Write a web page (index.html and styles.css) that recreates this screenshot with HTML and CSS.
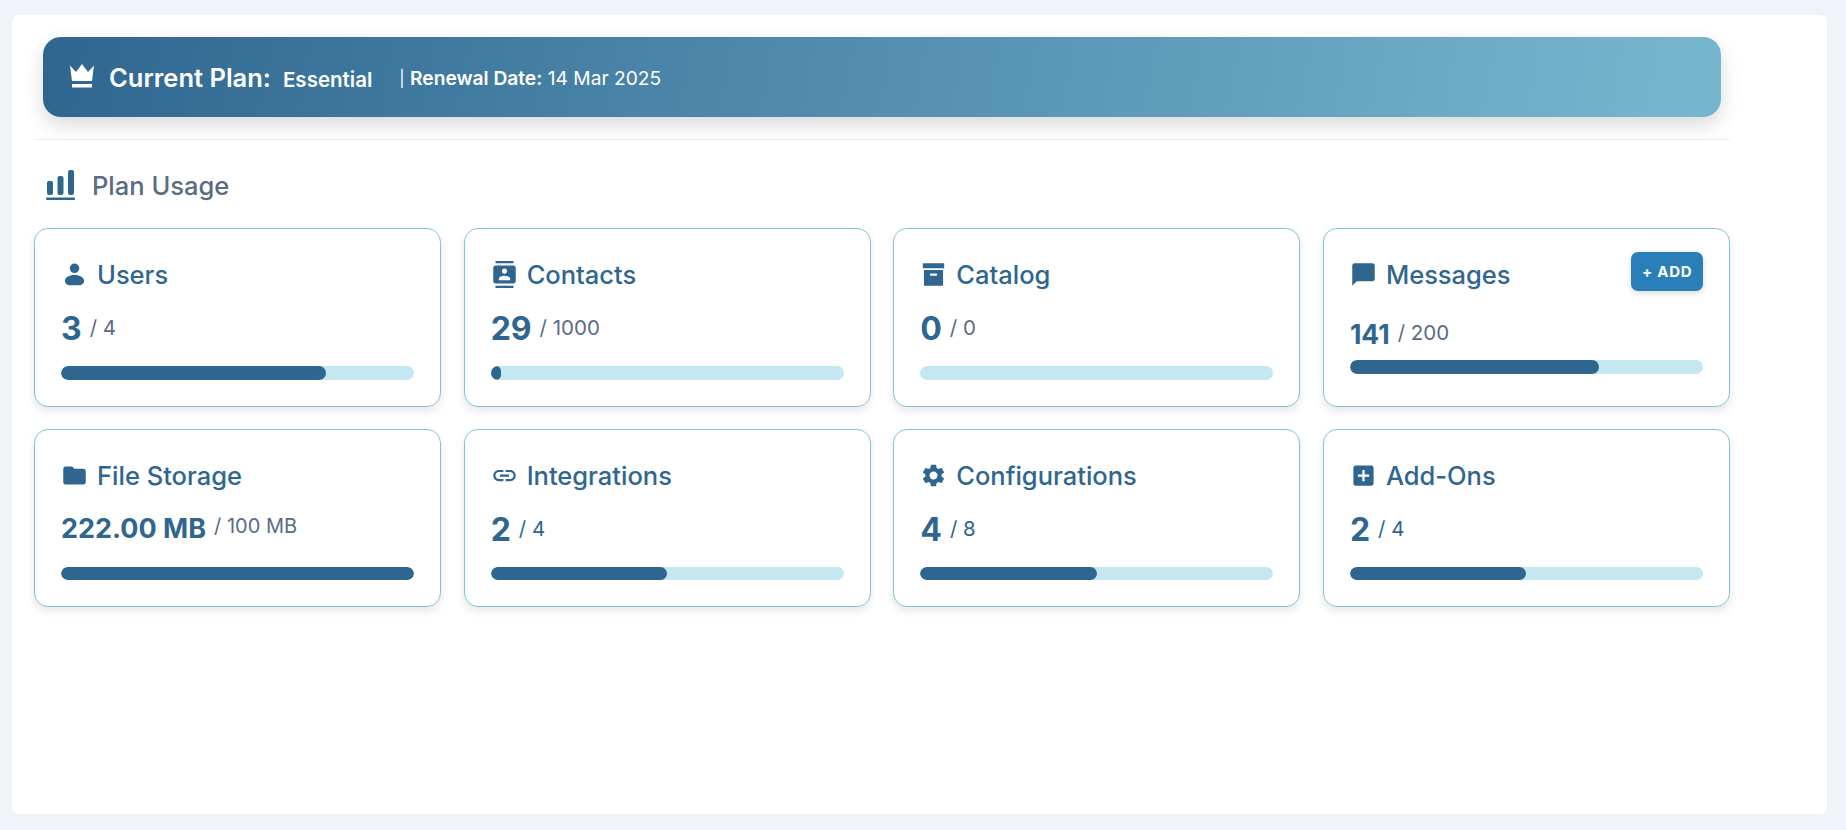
FILE: index.html
```html
<!DOCTYPE html>
<html lang="en">
<head>
    <meta charset="UTF-8">
    <meta name="viewport" content="width=device-width, initial-scale=1.0">
    <title>Plan Usage</title>
    <link rel="stylesheet" href="styles.css">
</head>
<body>

    <div class="panel">
        <div class="plan-banner">
            <svg class="crown" viewBox="0 0 26 24"><path d="M1 1.500 7 8l6-8 6 8 6-6.500-2 15.500H3z"/><path d="M3 20h20v3.500H3z"/></svg>
            <span class="plan-label">Current Plan:</span>
            <span class="plan-name">Essential</span>
            <span class="renewal"><span class="renewal-bar">|</span> <b>Renewal Date:</b> 14 Mar 2025</span>
        </div>

        <div class="divider"></div>

        <h2 class="section-title">
            <svg class="chart" viewBox="0 0 29 30"><rect x="1" y="11" width="6" height="14" rx="2"/><rect x="11.500" y="6" width="6" height="19" rx="2"/><rect x="22" y="0" width="6" height="25" rx="2"/><rect x="0" y="27.500" width="29" height="2.500" rx="1"/></svg>
            Plan Usage
        </h2>

        <div class="usage-grid">
            <div class="card">
                <div class="card-head">
                    <h3 class="card-title">
                        <svg class="icon" viewBox="0 0 24 24"><circle cx="12" cy="6.500" r="4.200"/><path d="M12 12.500c5 0 8.500 2.200 8.500 5.200 0 2.300-2 3.800-4.500 3.800H8c-2.500 0-4.500-1.500-4.500-3.800 0-3 3.500-5.200 8.500-5.200z"/></svg>
                        Users
                    </h3>
                </div>
                <div class="count"><span class="used">3</span><span class="limit">/ 4</span></div>
                <div class="bar"><div class="fill" style="width: 75%"></div></div>
            </div>

            <div class="card">
                <div class="card-head">
                    <h3 class="card-title">
                        <svg class="icon" viewBox="0 0 24 24"><path d="M20 0H4v2h16V0zM4 24h16v-2H4v2zM20 4H4c-1.100 0-2 .9-2 2v12c0 1.100.9 2 2 2h16c1.100 0 2-.9 2-2V6c0-1.100-.9-2-2-2zm-8 2.750c1.240 0 2.250 1.010 2.250 2.250s-1.010 2.250-2.250 2.250S9.750 10.240 9.750 9 10.760 6.750 12 6.750zM17 17H7v-1.500c0-1.670 3.330-2.500 5-2.500s5 .83 5 2.500V17z"/></svg>
                        Contacts
                    </h3>
                </div>
                <div class="count"><span class="used">29</span><span class="limit">/ 1000</span></div>
                <div class="bar"><div class="fill" style="width: 2.9%"></div></div>
            </div>

            <div class="card">
                <div class="card-head">
                    <h3 class="card-title">
                        <svg class="icon" viewBox="0 0 24 24"><path d="M2.500 2h19v4.500h-19zM3.500 8h17v14h-17zM9 11v2.200h6V11z" fill-rule="evenodd"/></svg>
                        Catalog
                    </h3>
                </div>
                <div class="count"><span class="used">0</span><span class="limit">/ 0</span></div>
                <div class="bar"><div class="fill" style="width: 0%"></div></div>
            </div>

            <div class="card">
                <div class="card-head">
                    <h3 class="card-title">
                        <svg class="icon" viewBox="0 0 24 24"><path d="M20 2H4c-1.100 0-2 .9-2 2v18l4-4h14c1.100 0 2-.9 2-2V4c0-1.100-.9-2-2-2z"/></svg>
                        Messages
                    </h3>
                    <button class="add-btn">+ ADD</button>
                </div>
                <div class="count count-small"><span class="used">141</span><span class="limit">/ 200</span></div>
                <div class="bar"><div class="fill" style="width: 70.500%"></div></div>
            </div>

            <div class="card">
                <div class="card-head">
                    <h3 class="card-title">
                        <svg class="icon" viewBox="0 0 24 24"><path d="M10 4H4c-1.100 0-1.990.9-1.990 2L2 18c0 1.100.9 2 2 2h16c1.100 0 2-.9 2-2V8c0-1.100-.9-2-2-2h-8l-2-2z"/></svg>
                        File Storage
                    </h3>
                </div>
                <div class="count count-storage"><span class="used">222.00 MB</span><span class="limit">/ 100 MB</span></div>
                <div class="bar"><div class="fill" style="width: 100%"></div></div>
            </div>

            <div class="card">
                <div class="card-head">
                    <h3 class="card-title">
                        <svg class="icon" viewBox="0 0 24 24"><path d="M3.900 12c0-1.710 1.390-3.100 3.100-3.100h4V7H7c-2.760 0-5 2.240-5 5s2.240 5 5 5h4v-1.900H7c-1.710 0-3.100-1.390-3.100-3.100zM8 13h8v-2H8v2zm9-6h-4v1.900h4c1.710 0 3.100 1.390 3.100 3.100s-1.390 3.100-3.100 3.100h-4V17h4c2.760 0 5-2.240 5-5s-2.240-5-5-5z"/></svg>
                        Integrations
                    </h3>
                </div>
                <div class="count"><span class="used">2</span><span class="limit limit-blue">/ 4</span></div>
                <div class="bar"><div class="fill" style="width: 50%"></div></div>
            </div>

            <div class="card">
                <div class="card-head">
                    <h3 class="card-title">
                        <svg class="icon" viewBox="0 0 24 24"><path d="M19.140 12.940c.04-.3.06-.61.06-.94 0-.32-.02-.64-.07-.94l2.030-1.580c.18-.14.23-.41.12-.61l-1.920-3.320c-.12-.22-.37-.29-.59-.22l-2.390.96c-.5-.38-1.030-.7-1.620-.94l-.36-2.540c-.04-.24-.24-.41-.48-.41h-3.840c-.24 0-.43.17-.47.41l-.36 2.540c-.59.24-1.130.57-1.620.94l-2.390-.96c-.22-.08-.47 0-.59.22L2.740 8.870c-.12.21-.08.47.12.61l2.030 1.580c-.05.3-.09.63-.09.94s.02.64.07.94l-2.030 1.580c-.18.14-.23.41-.12.61l1.920 3.320c.12.22.37.29.59.22l2.390-.96c.5.38 1.030.7 1.620.94l.36 2.540c.05.24.24.41.48.41h3.840c.24 0 .44-.17.47-.41l.36-2.540c.59-.24 1.130-.56 1.620-.94l2.390.96c.22.08.47 0 .59-.22l1.920-3.320c.12-.22.07-.47-.12-.61l-2.010-1.580zM12 15.600c-1.980 0-3.600-1.620-3.600-3.600s1.620-3.600 3.600-3.600 3.600 1.620 3.600 3.600-1.620 3.600-3.600 3.600z"/></svg>
                        Configurations
                    </h3>
                </div>
                <div class="count"><span class="used">4</span><span class="limit limit-blue">/ 8</span></div>
                <div class="bar"><div class="fill" style="width: 50%"></div></div>
            </div>

            <div class="card">
                <div class="card-head">
                    <h3 class="card-title">
                        <svg class="icon" viewBox="0 0 24 24"><path d="M19 3H5c-1.110 0-2 .9-2 2v14c0 1.100.89 2 2 2h14c1.100 0 2-.9 2-2V5c0-1.100-.9-2-2-2zm-2 10h-4v4h-2v-4H7v-2h4V7h2v4h4v2z"/></svg>
                        Add-Ons
                    </h3>
                </div>
                <div class="count"><span class="used">2</span><span class="limit limit-blue">/ 4</span></div>
                <div class="bar"><div class="fill" style="width: 50%"></div></div>
            </div>
        </div>
    </div>

</body>
</html>
```

FILE: styles.css
```css
body {
    font-family: "Inter", "Liberation Sans", sans-serif;
    background: #f0f4f8;
    margin: 0;
    padding: 15px 19px 16px 12px;
}
.panel {
    height: 799px;
    box-sizing: border-box;
    background: white;
    border-radius: 8px;
    padding: 22px 97px 0 22px;
}
.plan-banner {
    display: flex;
    align-items: center;
    height: 80px;
    margin: 0 9px;
    padding-left: 26px;
    color: white;
    background: linear-gradient(100deg, #2f6690 0%, #76b5ce 97%);
    border-radius: 18px;
    box-shadow: 0 8px 20px rgba(0, 0, 0, 0.15);
}
.crown {
    width: 26px;
    height: 24px;
    margin: -2px 14px 0 0;
    fill: white;
}
.plan-label {
    font-size: 25.500px;
    font-weight: 600;
}
.plan-name {
    font-size: 20.500px;
    font-weight: 600;
    margin: 4px 0 0 12px;
}
.renewal {
    font-size: 19.200px;
    margin: 1px 0 0 27px;
}
.renewal-bar {
    font-size: 16px;
    vertical-align: 1px;
}
.renewal b {
    font-weight: 600;
}
.divider {
    height: 1px;
    margin-top: 22px;
    background: #e8edf3;
}
.section-title {
    display: flex;
    align-items: center;
    height: 30px;
    margin: 30px 0 28px;
    padding-left: 12px;
    font-size: 25.500px;
    font-weight: 500;
    color: #5a6b85;
}
.chart {
    width: 29px;
    height: 30px;
    margin-right: 17px;
    fill: #2f6690;
}
.usage-grid {
    display: grid;
    grid-template-columns: repeat(4, 1fr);
    gap: 22px 22.500px;
}
.card {
    box-sizing: border-box;
    height: 178.500px;
    padding: 23px 26px 0;
    border: 1px solid #81c3d7;
    border-radius: 14px;
    box-shadow: 0 4px 8px rgba(0, 0, 0, 0.1);
}
.card-head {
    display: flex;
    justify-content: space-between;
    align-items: flex-start;
}
.card-title {
    display: flex;
    align-items: center;
    gap: 9px;
    margin: 0;
    height: 45px;
    font-size: 25.500px;
    font-weight: 500;
    color: #2f6690;
}
.icon {
    width: 27px;
    height: 27px;
    fill: #2f6690;
}
.add-btn {
    height: 39px;
    padding: 0 10.500px;
    color: white;
    background: #2a7fb8;
    border: none;
    border-radius: 7px;
    font-family: "Inter", sans-serif;
    font-size: 15px;
    font-weight: 700;
    letter-spacing: 0.8px;
    box-shadow: 0 2px 6px rgba(0, 0, 0, 0.15);
}
.count {
    display: flex;
    align-items: flex-start;
    gap: 8px;
    height: 50px;
    margin-top: 10px;
    margin-bottom: 9px;
}
.used {
    font-size: 32px;
    font-weight: 700;
    line-height: 44px;
    color: #2f6690;
}
.limit {
    font-size: 20.500px;
    line-height: 41px;
    color: #5a6b85;
}
.limit-blue {
    color: #2f6690;
}
.count-small {
    height: 37px;
    margin-top: 18px;
    margin-bottom: 8px;
}
.count-small .used {
    font-size: 26.500px;
    line-height: 38px;
}
.count-small .limit {
    line-height: 36px;
}
.count-storage .used {
    font-size: 27px;
    line-height: 42px;
}
.count-storage .limit {
    font-size: 20px;
    line-height: 37px;
}
.bar {
    height: 13.500px;
    background: #c5e7f2;
    border-radius: 7px;
    overflow: hidden;
}
.fill {
    height: 100%;
    background: #2f6690;
    border-radius: 7px;
}
```
